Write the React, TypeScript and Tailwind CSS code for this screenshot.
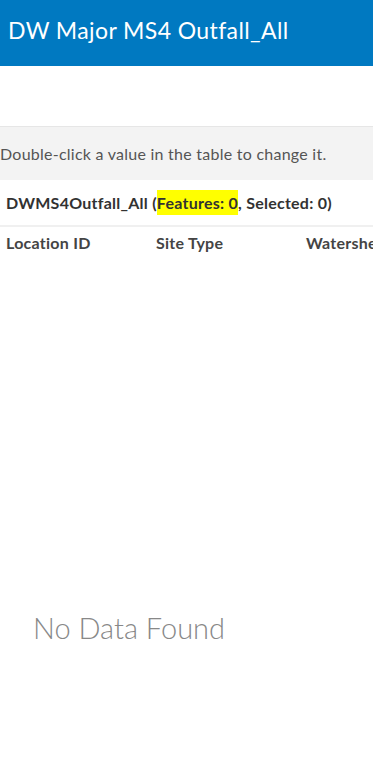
export default function App() {
  return (
    <div className="w-[373px] h-[777px] bg-white overflow-hidden font-['Lato','Open_Sans',sans-serif]">
      {/* Header */}
      <div className="h-[66px] bg-[#0079c1] flex items-center px-2 pb-[5px]">
        <h1 className="text-white text-[23px] leading-none tracking-[0.4px]">
          DW Major MS4 Outfall_All
        </h1>
      </div>

      <div className="h-[60px]" />

      {/* Hint */}
      <div className="h-[54px] bg-[#f3f3f3] border-t border-[#e6e6e6] flex items-center">
        <p className="text-[#555] text-[16px] leading-none tracking-[0.25px] whitespace-nowrap">
          Double-click a value in the table to change it.
        </p>
      </div>

      {/* Layer title */}
      <div className="h-[47px] border-b-2 border-[#f0f0f0] flex items-center px-[6px]">
        <p className="text-[#323232] text-[16px] font-bold leading-none tracking-[0.25px] whitespace-nowrap">
          DWMS4Outfall_All (<span className="bg-[#ffff00] py-[3px]">Features: 0</span>, Selected: 0)
        </p>
      </div>

      {/* Column headers - last one runs past the edge, as in the table */}
      <div className="h-[32px] flex items-center px-[6px] text-[16px] font-bold text-[#444] tracking-[0.25px] whitespace-nowrap overflow-hidden">
        <span className="w-[150px] shrink-0">Location ID</span>
        <span className="w-[150px] shrink-0">Site Type</span>
        <span className="shrink-0">Watershed</span>
      </div>

      {/* Empty state */}
      <div className="pt-[354px] pl-[33px]">
        <p className="text-[#888] text-[29px] font-light leading-none">No Data Found</p>
      </div>
    </div>
  );
}
